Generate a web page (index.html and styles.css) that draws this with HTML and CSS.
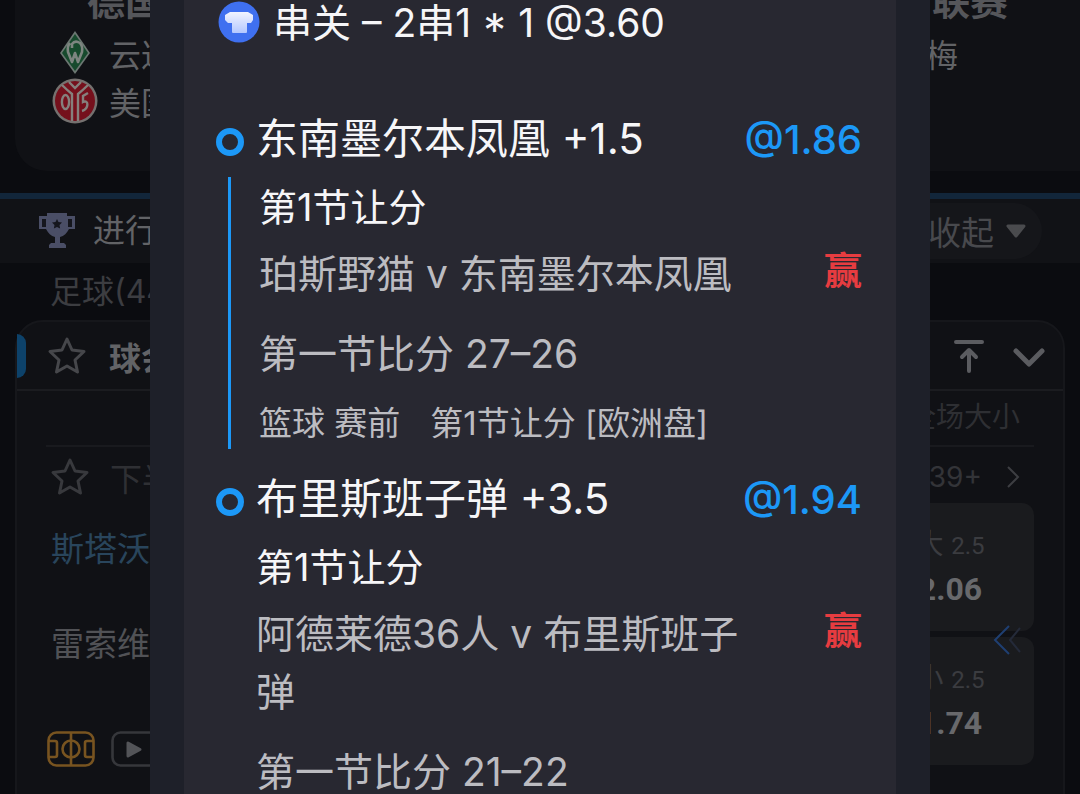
FILE: index.html
```html
<!DOCTYPE html>
<html lang="zh-CN">
<head>
<meta charset="utf-8">
<meta name="viewport" content="width=device-width, initial-scale=1">
<title>串关</title>
<link rel="stylesheet" href="styles.css">
</head>
<body>
<main class="page">
  <section class="featured">
    <h2 class="league"><span>德国</span><span>联赛</span></h2>
    <div class="club">
      <svg class="crest" viewBox="0 0 46 46"><path d="M23 1 38 23 23 44 8 23Z" fill="#6c7772"/><path d="M23 4 36 23 23 41 10 23Z" fill="#174a2d"/><path d="M18 13q-3 3-2 9l4 10 3-9 3 9 4-10q1-6-2-9-5-3-8 1v4" fill="none" stroke="#7d8580" stroke-width="2.600" stroke-linejoin="round"/></svg>
      <span>云达</span><span class="club-away">梅</span>
    </div>
    <div class="club">
      <svg class="crest" viewBox="0 0 46 46"><circle cx="23" cy="23" r="22.500" fill="#75716f"/><circle cx="23" cy="23" r="20" fill="#75101c"/><g fill="none" stroke="#85807d" stroke-width="2.400"><ellipse cx="13.500" cy="24" rx="3.600" ry="7"/><path d="M10 7q5 5 10 9v27M36 7q-5 5-10 9v27M17 4l6 6 6-6M36 15l-5 3v6c6-3 6 7-1 9"/></g></svg>
      <span>美国</span>
    </div>
  </section>

  <header class="live-bar">
    <svg class="trophy" viewBox="0 0 38 38"><path d="M9 1h20v3h8v13h-6c-2 4-5 7-9 8v6h4l2 2v3H11v-3l2-2h4v-6c-4-1-7-4-9-8H1V4h8Z" fill="#4a4e66"/><path d="M4 7h4v8H4zM30 7h4v8h-4z" fill="#15161d"/><path d="m19 7 1.500 3 3.500.6-2.500 2.500.6 3.500-3.100-1.600-3.100 1.600.6-3.500-2.500-2.500 3.500-.6Z" fill="#15161d"/></svg>
    <span class="live-title">进行</span>
    <button class="collapse" type="button">收起<svg viewBox="0 0 20 14"><path d="M2 2h16l-8 10Z" fill="#4a4b4e" stroke="#4a4b4e" stroke-width="3" stroke-linejoin="round"/></svg></button>
  </header>

  <p class="sport-label">足球(44)</p>

  <section class="match-card">
    <header class="card-head">
      <svg class="star" viewBox="0 0 40 40"><path d="m20 3 5 11 12 1.500-9 8.500 2.500 12L20 30 9.500 36 12 24 3 15.500 15 14Z"/></svg>
      <h3>球会</h3>
      <button class="icon-btn" type="button" aria-label="置顶"><svg viewBox="0 0 36 36"><path d="M5 4h26M18 33V13M11 19l7-7 7 7"/></svg></button>
      <button class="icon-btn" type="button" aria-label="展开"><svg viewBox="0 0 36 36"><path d="M5 13 18 26 31 13" stroke-width="5"/></svg></button>
    </header>
    <div class="card-body">
      <div class="columns">全场大小</div>
      <div class="event-info">
        <svg class="star" viewBox="0 0 40 40"><path d="m20 3 5 11 12 1.500-9 8.500 2.500 12L20 30 9.500 36 12 24 3 15.500 15 14Z"/></svg>
        <span class="period">下半</span>
        <a class="more" href="#">39+<svg viewBox="0 0 14 24"><path d="m2 2 10 10L2 22"/></svg></a>
      </div>
      <div class="event">
        <div class="sides">
          <p class="side home">斯塔沃</p>
          <p class="side">雷索维</p>
          <div class="media">
            <svg class="pitch" viewBox="0 0 48 36"><g fill="none" stroke="#785420" stroke-width="2.600"><rect x="1.500" y="1.500" width="45" height="33" rx="8"/><circle cx="24" cy="18" r="8.500"/><path d="M24 2v32M2 10h6q2 0 2 2v12q0 2-2 2H2M46 10h-6q-2 0-2 2v12q0 2 2 2h6"/></g></svg>
            <svg class="video" viewBox="0 0 48 36"><rect x="1.500" y="1.500" width="45" height="33" rx="8" fill="none" stroke="#36373b" stroke-width="2.600"/><path d="M17 12v13l12-6.500Z" fill="#535458" stroke="#535458" stroke-width="3" stroke-linejoin="round"/></svg>
          </div>
        </div>
        <div class="odds">
          <button class="odd" type="button"><span class="line">大 <b>2.5</b></span><strong>2.06</strong></button>
          <button class="odd" type="button"><span class="line">小 <b>2.5</b></span><strong>1.74</strong></button>
          <svg class="swipe" viewBox="0 0 30 32"><path d="M17 2 3 16l14 14" stroke="#1f3f72"/><path d="M28 4 18 16l10 12" stroke="#242a39"/></svg>
        </div>
      </div>
    </div>
  </section>
</main>

<div class="overlay">
  <div class="slip-frame">
    <article class="slip">
      <h1 class="slip-title">
        <svg viewBox="0 0 42 42"><defs><linearGradient id="shirt" x1="0" y1="0" x2="0" y2="1"><stop offset="0" stop-color="#f1f4ff"/><stop offset="1" stop-color="#b4c8ff"/></linearGradient></defs><circle cx="21" cy="21" r="20.500" fill="#3f70f0"/><path d="M12 11h18l5 3v5l-2 3h-4v9q0 1-1 1H15q-1 0-1-1v-9h-4l-3-3v-5Z" fill="url(#shirt)"/></svg>
        <span>串关 – 2串1 * 1 @3.60</span>
      </h1>
      <section class="leg">
        <div class="leg-head"><i class="dot"></i><h2>东南墨尔本凤凰 +1.5</h2><span class="price">@1.86</span></div>
        <div class="leg-body linked">
          <p class="market">第1节让分</p>
          <div class="fixture"><p>珀斯野猫 v 东南墨尔本凤凰</p><strong>赢</strong></div>
          <p class="score">第一节比分 27–26</p>
          <p class="meta"><span>篮球 赛前</span><span>第1节让分 [欧洲盘]</span></p>
        </div>
      </section>
      <section class="leg">
        <div class="leg-head"><i class="dot"></i><h2>布里斯班子弹 +3.5</h2><span class="price">@1.94</span></div>
        <div class="leg-body">
          <p class="market">第1节让分</p>
          <div class="fixture"><p>阿德莱德36人 v 布里斯班子弹</p><strong>赢</strong></div>
          <p class="score">第一节比分 21–22</p>
        </div>
      </section>
    </article>
  </div>
</div>
</body>
</html>
```
FILE: styles.css
```css
* { box-sizing: border-box; }
html, body { height: 100%; }
body {
  margin: 0;
  overflow: hidden;
  background: #0b0c10;
  color: #626366;
  font-family: Inter, "Noto Sans CJK SC", sans-serif;
  font-size: 32px;
}
h1, h2, h3, p { margin: 0; font-weight: 400; }
button { padding: 0; border: 0; background: none; color: inherit; font: inherit; }
svg { display: block; flex: none; }

.page { overflow: hidden; height: 100%; }

/* Featured league */
.featured {
  height: 171px;
  margin-left: 15px;
  padding: 0 72px 0 37px;
  border-radius: 0 0 0 32px;
  background: #101115;
}
.league {
  display: flex;
  justify-content: space-between;
  height: 29px;
  padding-left: 35px;
  color: #55565a;
  font-size: 38px;
  font-weight: 700;
  line-height: 2px;
}
.club { display: flex; align-items: center; gap: 11px; height: 48px; }
.crest { width: 46px; height: 46px; }
.club-away { margin-left: auto; padding-right: 50px; }

/* Live bar */
.live-bar {
  display: flex;
  align-items: center;
  height: 70px;
  margin-top: 22px;
  padding: 0 38px;
  border-top: 6px solid #12263a;
  background: #111216;
}
.trophy { width: 38px; height: 38px; }
.live-title { margin-left: 17px; padding-bottom: 6px; }
.collapse {
  display: flex;
  align-items: center;
  gap: 12px;
  height: 56px;
  margin-left: auto;
  padding: 0 16px 0 32px;
  border-radius: 28px;
  background: #15161a;
  color: #48494d;
  font-size: 33px;
}
.collapse svg { width: 20px; height: 14px; }
.sport-label { padding-left: 50px; color: #3c3d41; line-height: 57px; }

/* Match card */
.match-card {
  height: 500px;
  margin: 0 15px;
  border: 2px solid #16171b;
  border-radius: 28px 28px 0 0;
  background: #101115;
}
.card-head {
  display: flex;
  align-items: center;
  gap: 24px;
  height: 69px;
  padding: 0 16px 0 0;
  border-bottom: 2px solid #1b1c20;
}
.card-head::before {
  content: "";
  width: 9px;
  height: 44px;
  border-radius: 0 9px 9px 0;
  background: #0d426a;
}
.card-head h3 { margin-right: auto; font-size: 32px; font-weight: 700; }
.star { width: 40px; height: 40px; fill: none; stroke: #46474b; stroke-width: 3; stroke-linejoin: round; }
.card-head .star { margin: 0 -2px 0 -3px; }
.icon-btn svg { width: 36px; height: 36px; fill: none; stroke: #5b5c60; stroke-width: 4; stroke-linecap: round; stroke-linejoin: round; }
.card-body { padding: 0 29px; }
.columns {
  height: 56px;
  padding-right: 14px;
  border-bottom: 2px solid #191a1e;
  color: #2e2f33;
  font-size: 28px;
  line-height: 52px;
  text-align: right;
}
.event-info { display: flex; align-items: center; height: 56px; padding: 4px 14px 0 4px; color: #2f3034; }
.event-info .star { stroke: #38393d; }
.period { margin-left: 20px; }
.more { display: flex; align-items: center; gap: 24px; margin-left: auto; color: #333438; font-size: 28px; text-decoration: none; }
.more svg { width: 14px; height: 24px; fill: none; stroke: #3d3e42; stroke-width: 2; }
.event { display: grid; grid-template-columns: 1fr 168px; }
.sides { padding-left: 5px; }
.side { height: 95px; color: #515256; font-size: 33px; line-height: 92px; }
.home { color: #29455c; }
.media { display: flex; gap: 16px; margin: 38px 0 0 -4px; }
.media svg { width: 48px; height: 36px; }
.odds { position: relative; display: grid; gap: 6px; align-content: start; }
.odd {
  display: flex;
  flex-direction: column;
  align-items: center;
  height: 128px;
  padding-top: 20px;
  border-radius: 12px;
  background: #1a1b1e;
  color: #3b3c40;
}
.line { font-size: 28px; line-height: 42px; }
.line b { font-family: Roboto, sans-serif; font-size: 24px; font-weight: 400; }
.odd strong { color: #68696c; font-family: Roboto, sans-serif; font-size: 32px; line-height: 44px; }
.swipe { position: absolute; right: 12px; top: 121px; width: 30px; height: 32px; fill: none; stroke-width: 2; }

/* Bet slip */
.overlay { position: fixed; inset: 0; display: flex; padding: 0 150px; overflow: hidden; }
.slip-frame { flex: 1; padding: 0 34px; background: #1e2029; }
.slip { min-height: 100%; padding: 0 34px 0 32px; background: #282831; color: #f6f6f8; }
.slip-title {
  display: flex;
  align-items: center;
  gap: 13px;
  height: 105px;
  padding: 0 2px 61px;
  font-size: 39px;
  white-space: nowrap;
}
.slip-title svg { width: 42px; height: 42px; }
.slip-title span { padding-bottom: 4px; }
.leg { margin-bottom: 16px; }
.leg-head { display: flex; align-items: center; gap: 12px; height: 68px; }
.leg-head h2 { flex: 1; font-size: 42px; line-height: 68px; white-space: nowrap; }
.dot { width: 28px; height: 28px; margin-top: 6px; border: 6px solid #1c98f7; border-radius: 50%; }
.price { color: #1c98f7; font-size: 40px; font-weight: 500; }
.leg-body { margin: 4px 0 0 12px; padding-left: 28px; font-size: 39px; }
.linked { border-left: 3px solid #1c98f7; }
.market { font-size: 38px; line-height: 60px; }
.fixture { display: flex; justify-content: space-between; margin: 8px 0 16px; color: #bcbcc1; line-height: 58px; }
.fixture p { max-width: 490px; }
.fixture strong { margin-top: -4px; color: #e73c40; font-size: 38px; font-weight: 700; }
.score { color: #bcbcc1; line-height: 70px; }
.meta { display: flex; gap: 30px; margin-top: 8px; color: #bcbcc1; font-size: 33px; line-height: 52px; white-space: nowrap; }
```
